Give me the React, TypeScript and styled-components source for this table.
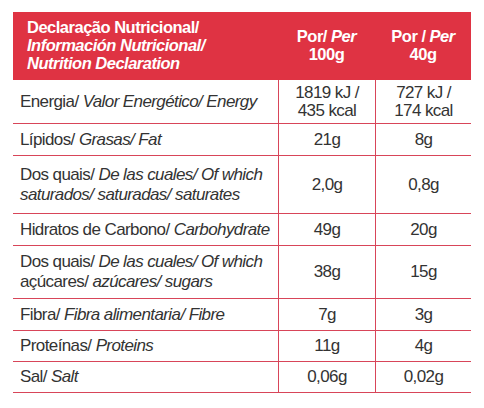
import styled, { createGlobalStyle } from "styled-components";
import { FC, ReactNode } from "react";

const Global = createGlobalStyle`
  body {
    margin: 0;
    background: #fff;
    font-family: "Liberation Sans", Arial, sans-serif;
  }
`;

interface Row {
	label: ReactNode;
	per100: ReactNode;
	per40: ReactNode;
	height: number;
}

const rows: Row[] = [
	{ label: <>Energia/ <i>Valor Energético/ Energy</i></>, per100: <>1819 kJ /<br />435 kcal</>, per40: <>727 kJ /<br />174 kcal</>, height: 44 },
	{ label: <>Lípidos/ <i>Grasas/ Fat</i></>, per100: '21g', per40: '8g', height: 32 },
	{ label: <>Dos quais/ <i>De las cuales/ Of which<br />saturados/ saturadas/ saturates</i></>, per100: '2,0g', per40: '0,8g', height: 58 },
	{ label: <>Hidratos de Carbono/ <i>Carbohydrate</i></>, per100: '49g', per40: '20g', height: 32 },
	{ label: <>Dos quais/ <i>De las cuales/ Of which</i><br />açúcares/ <i>azúcares/ sugars</i></>, per100: '38g', per40: '15g', height: 53 },
	{ label: <>Fibra/ <i>Fibra alimentaria/ Fibre</i></>, per100: '7g', per40: '3g', height: 32 },
	{ label: <>Proteínas/ <i>Proteins</i></>, per100: '11g', per40: '4g', height: 31 },
	{ label: <>Sal/ <i>Salt</i></>, per100: '0,06g', per40: '0,02g', height: 31 },
];

const App: FC = () => {
	return (
		<>
			<Global />
			<Page>
				<Table>
					<HeadRow>
						<HeadTitle>
							Declaração Nutricional/<br />
							<i>Información Nutricional/</i><br />
							<i>Nutrition Declaration</i>
						</HeadTitle>
						<HeadCol>Por/ <i>Per</i><br />100g</HeadCol>
						<HeadCol>Por / <i>Per</i><br />40g</HeadCol>
					</HeadRow>
					{rows.map((row, i) => (
						<BodyRow key={i} h={row.height}>
							<LabelCell><span>{row.label}</span></LabelCell>
							<ValueCell><span>{row.per100}</span></ValueCell>
							<ValueCell><span>{row.per40}</span></ValueCell>
						</BodyRow>
					))}
				</Table>
			</Page>
		</>
	);
};

export default App;

const Page = styled.div`
  padding: 12px 0 0 13px;
`;
const Table = styled.div`
  width: 458px;
  display: flex;
  flex-direction: column;
`;
const HeadRow = styled.div`
  display: grid;
  grid-template-columns: 265px 97px 96px;
  height: 68px;
  background-color: #df3343;
  color: #fff;
  font-weight: bold;
  font-size: 16.5px;
  line-height: 18px;
  letter-spacing: -0.5px;
`;
const HeadTitle = styled.div`
  padding: 6px 0 0 14px;
`;
const HeadCol = styled.div`
  text-align: center;
  padding-top: 15px;
`;
const BodyRow = styled.div<{ h: number }>`
  display: grid;
  grid-template-columns: 265px 97px 96px;
  height: ${props => props.h}px;
  border-bottom: 1.5px solid #d84559;
  box-sizing: border-box;
  color: #333;
  font-size: 17px;
  letter-spacing: -0.6px;
`;
const LabelCell = styled.div`
  display: flex;
  align-items: center;
  padding-left: 7px;
  line-height: 20px;
`;
const ValueCell = styled.div`
  display: flex;
  align-items: center;
  justify-content: center;
  text-align: center;
  line-height: 18px;
  border-left: 1.5px solid #d84559;
`;
